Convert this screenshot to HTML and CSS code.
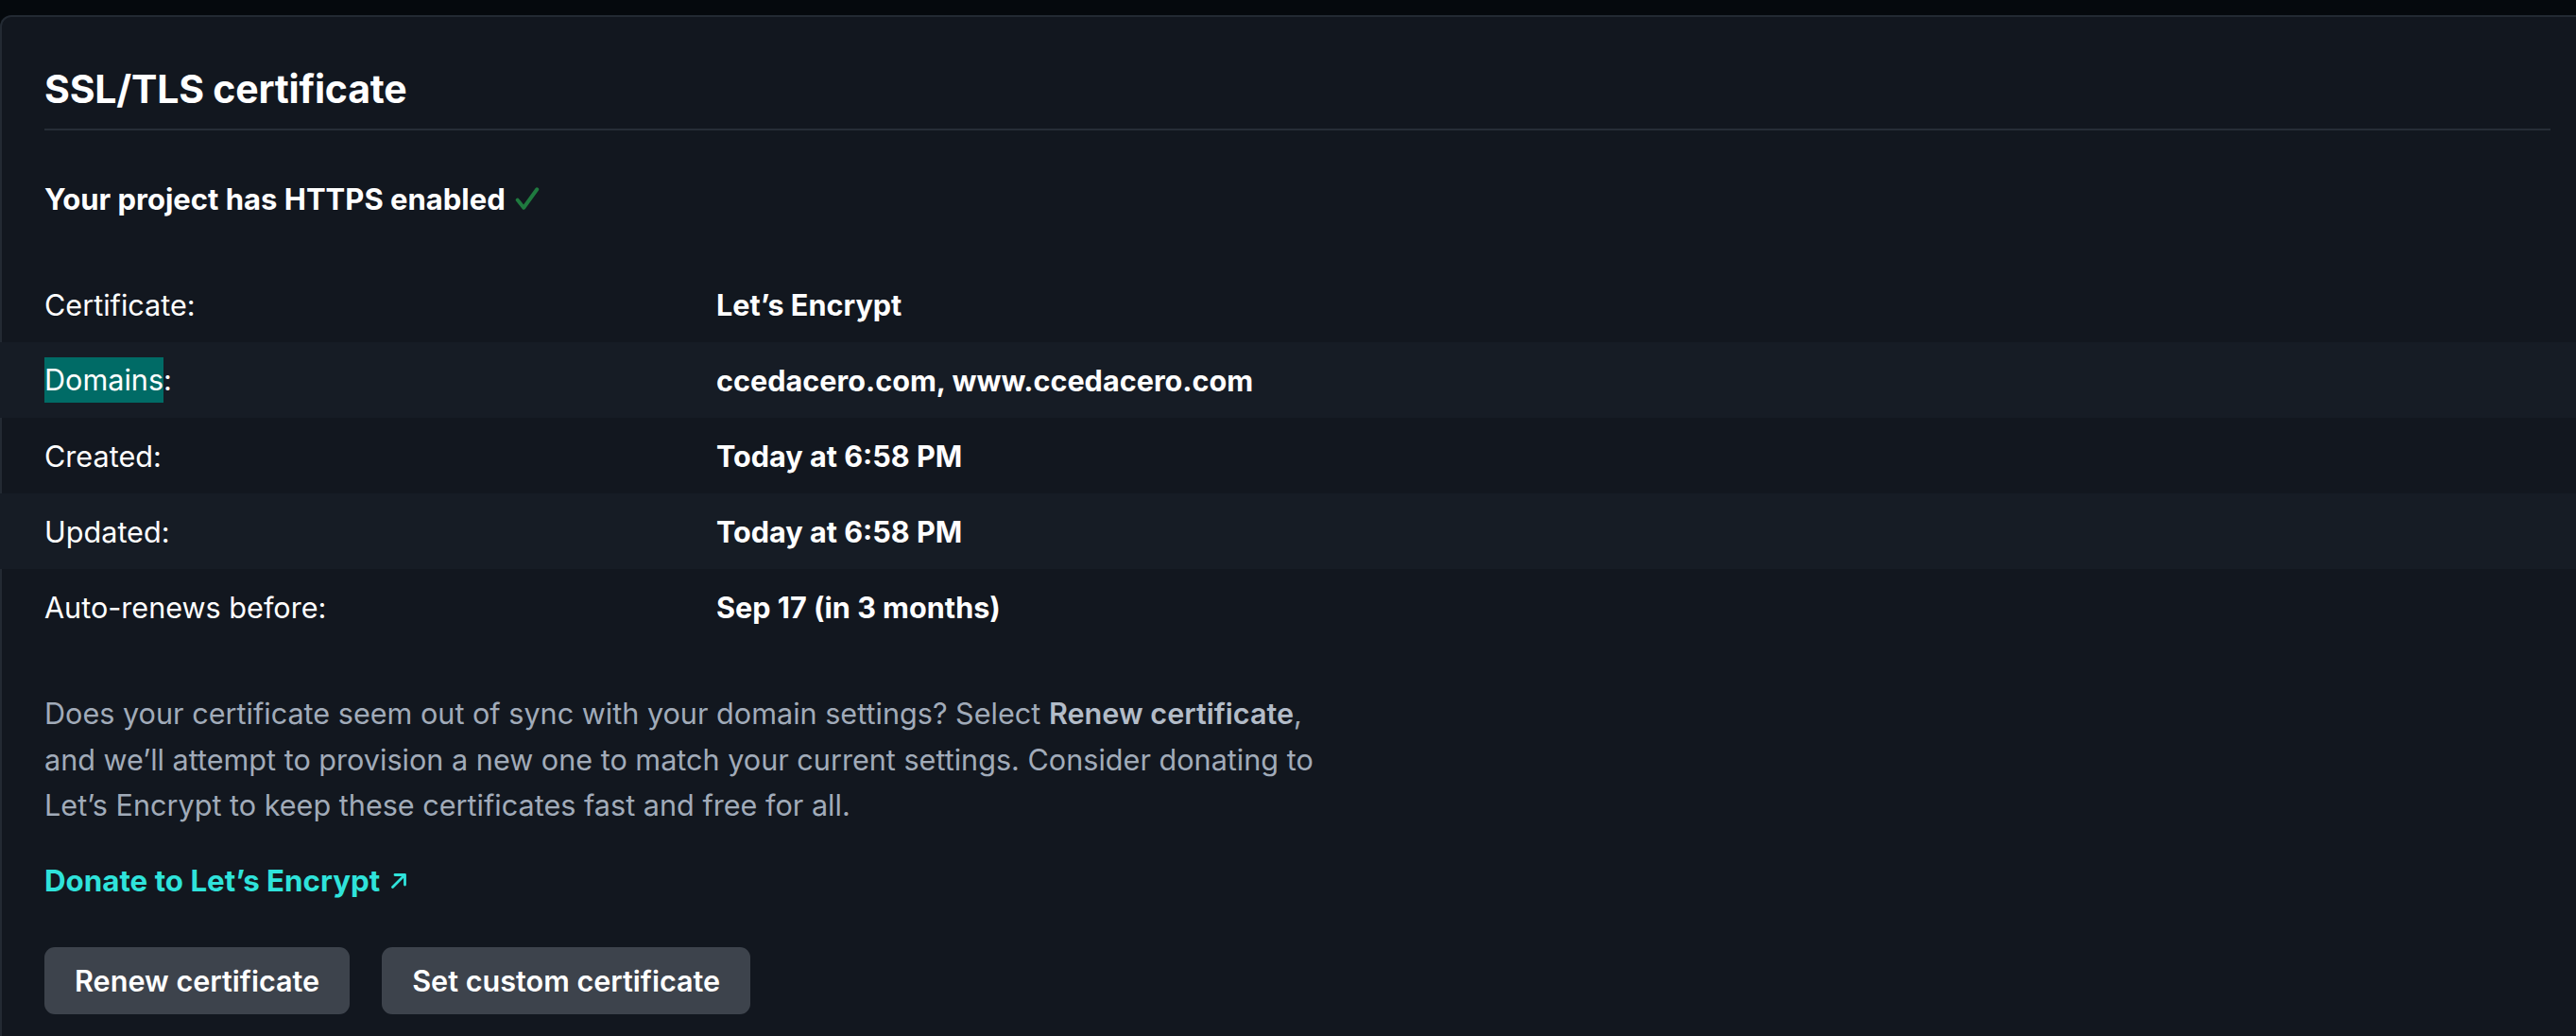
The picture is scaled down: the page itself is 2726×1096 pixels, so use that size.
FILE: index.html
```html
<!DOCTYPE html>
<html lang="en">
<head>
<meta charset="utf-8">
<title>SSL/TLS certificate</title>
<link rel="stylesheet" href="styles.css">
</head>
<body>
<div class="page">
  <section class="card">
    <h2 class="card-title">SSL/TLS certificate</h2>
    <p class="status">Your project has HTTPS enabled <svg class="check" width="26" height="26" viewBox="0 0 24 24"><polyline points="2.5,13.5 8.5,21 21.5,3" fill="none" stroke="#1f7a3f" stroke-width="3.6" stroke-linecap="round" stroke-linejoin="round"/></svg></p>
    <dl class="details">
      <div class="row"><dt>Certificate:</dt><dd>Let’s Encrypt</dd></div>
      <div class="row alt"><dt><span class="sel">Domains</span>:</dt><dd>ccedacero.com, www.ccedacero.com</dd></div>
      <div class="row"><dt>Created:</dt><dd>Today at 6:58 PM</dd></div>
      <div class="row alt"><dt>Updated:</dt><dd>Today at 6:58 PM</dd></div>
      <div class="row"><dt>Auto-renews before:</dt><dd>Sep 17 (in 3 months)</dd></div>
    </dl>
    <p class="note">Does your certificate seem out of sync with your domain settings? Select <strong>Renew certificate</strong>, and we’ll attempt to provision a new one to match your current settings. Consider donating to Let’s Encrypt to keep these certificates fast and free for all.</p>
    <a class="donate" href="#">Donate to Let’s Encrypt <svg class="arrow" width="20" height="20" viewBox="0 0 20 20"><path d="M3.5 16.5 L16 4 M6 3.5 H16.5 V14" fill="none" stroke="#2fe3db" stroke-width="2.8" stroke-linecap="round" stroke-linejoin="round"/></svg></a>
    <div class="actions">
      <button class="btn" type="button">Renew certificate</button>
      <button class="btn" type="button">Set custom certificate</button>
    </div>
  </section>
</div>
</body>
</html>
```

FILE: styles.css
```css
html, body {
  margin: 0;
  padding: 0;
  background: #05090d;
  overflow: hidden;
  height: 100%;
}
body {
  font-family: Inter, "Noto Sans", "Liberation Sans", sans-serif;
  color: #ffffff;
}
.page {
  padding-top: 16px;
  margin-right: -24px;
  height: 100vh;
  box-sizing: border-box;
}
.card {
  background: #12171f;
  border: 2px solid #232a33;
  border-bottom: none;
  border-radius: 12px 12px 0 0;
  padding: 48px 49px 0 45px;
  height: 100%;
  box-sizing: border-box;
}
.card-title {
  margin: 0;
  font-size: 41px;
  line-height: 56px;
  font-weight: 700;
  letter-spacing: -0.2px;
  padding-bottom: 14px;
  border-bottom: 2px solid #262d37;
}
.status {
  margin: 53px 0 0 0;
  font-size: 31px;
  line-height: 40px;
  font-weight: 700;
  display: flex;
  align-items: center;
  gap: 10px;
}
.check {
  display: block;
  margin-top: -2px;
}
.details {
  margin: 51px -49px 0 -47px;
}
.row {
  display: flex;
  align-items: center;
  height: 80px;
  padding-left: 47px;
  font-size: 30.6px;
}
.row.alt {
  background: #161c25;
}
.row dt {
  width: 711px;
  flex: none;
}
.row dd {
  margin: 0;
  font-weight: 700;
}
.sel {
  background: #006b66;
  display: inline-block;
  line-height: 48px;
}
.note {
  margin: 49px 0 0 0;
  max-width: 1370px;
  font-size: 30.6px;
  line-height: 48.5px;
  color: #a1abb9;
}
.note strong {
  font-weight: 600;
  color: #b3bcc8;
}
.donate {
  display: inline-flex;
  align-items: center;
  gap: 10px;
  margin: 35px 0 0 0;
  font-size: 31.3px;
  line-height: 40px;
  font-weight: 700;
  color: #2fe3db;
  text-decoration: none;
}
.arrow {
  display: block;
}
.actions {
  display: flex;
  gap: 34px;
  margin: 50px 0 0 0;
}
.btn {
  font-family: inherit;
  font-size: 30.6px;
  font-weight: 600;
  color: #ffffff;
  background: #3d434c;
  border: none;
  border-radius: 11px;
  height: 71px;
  padding: 0 32px;
}
```
